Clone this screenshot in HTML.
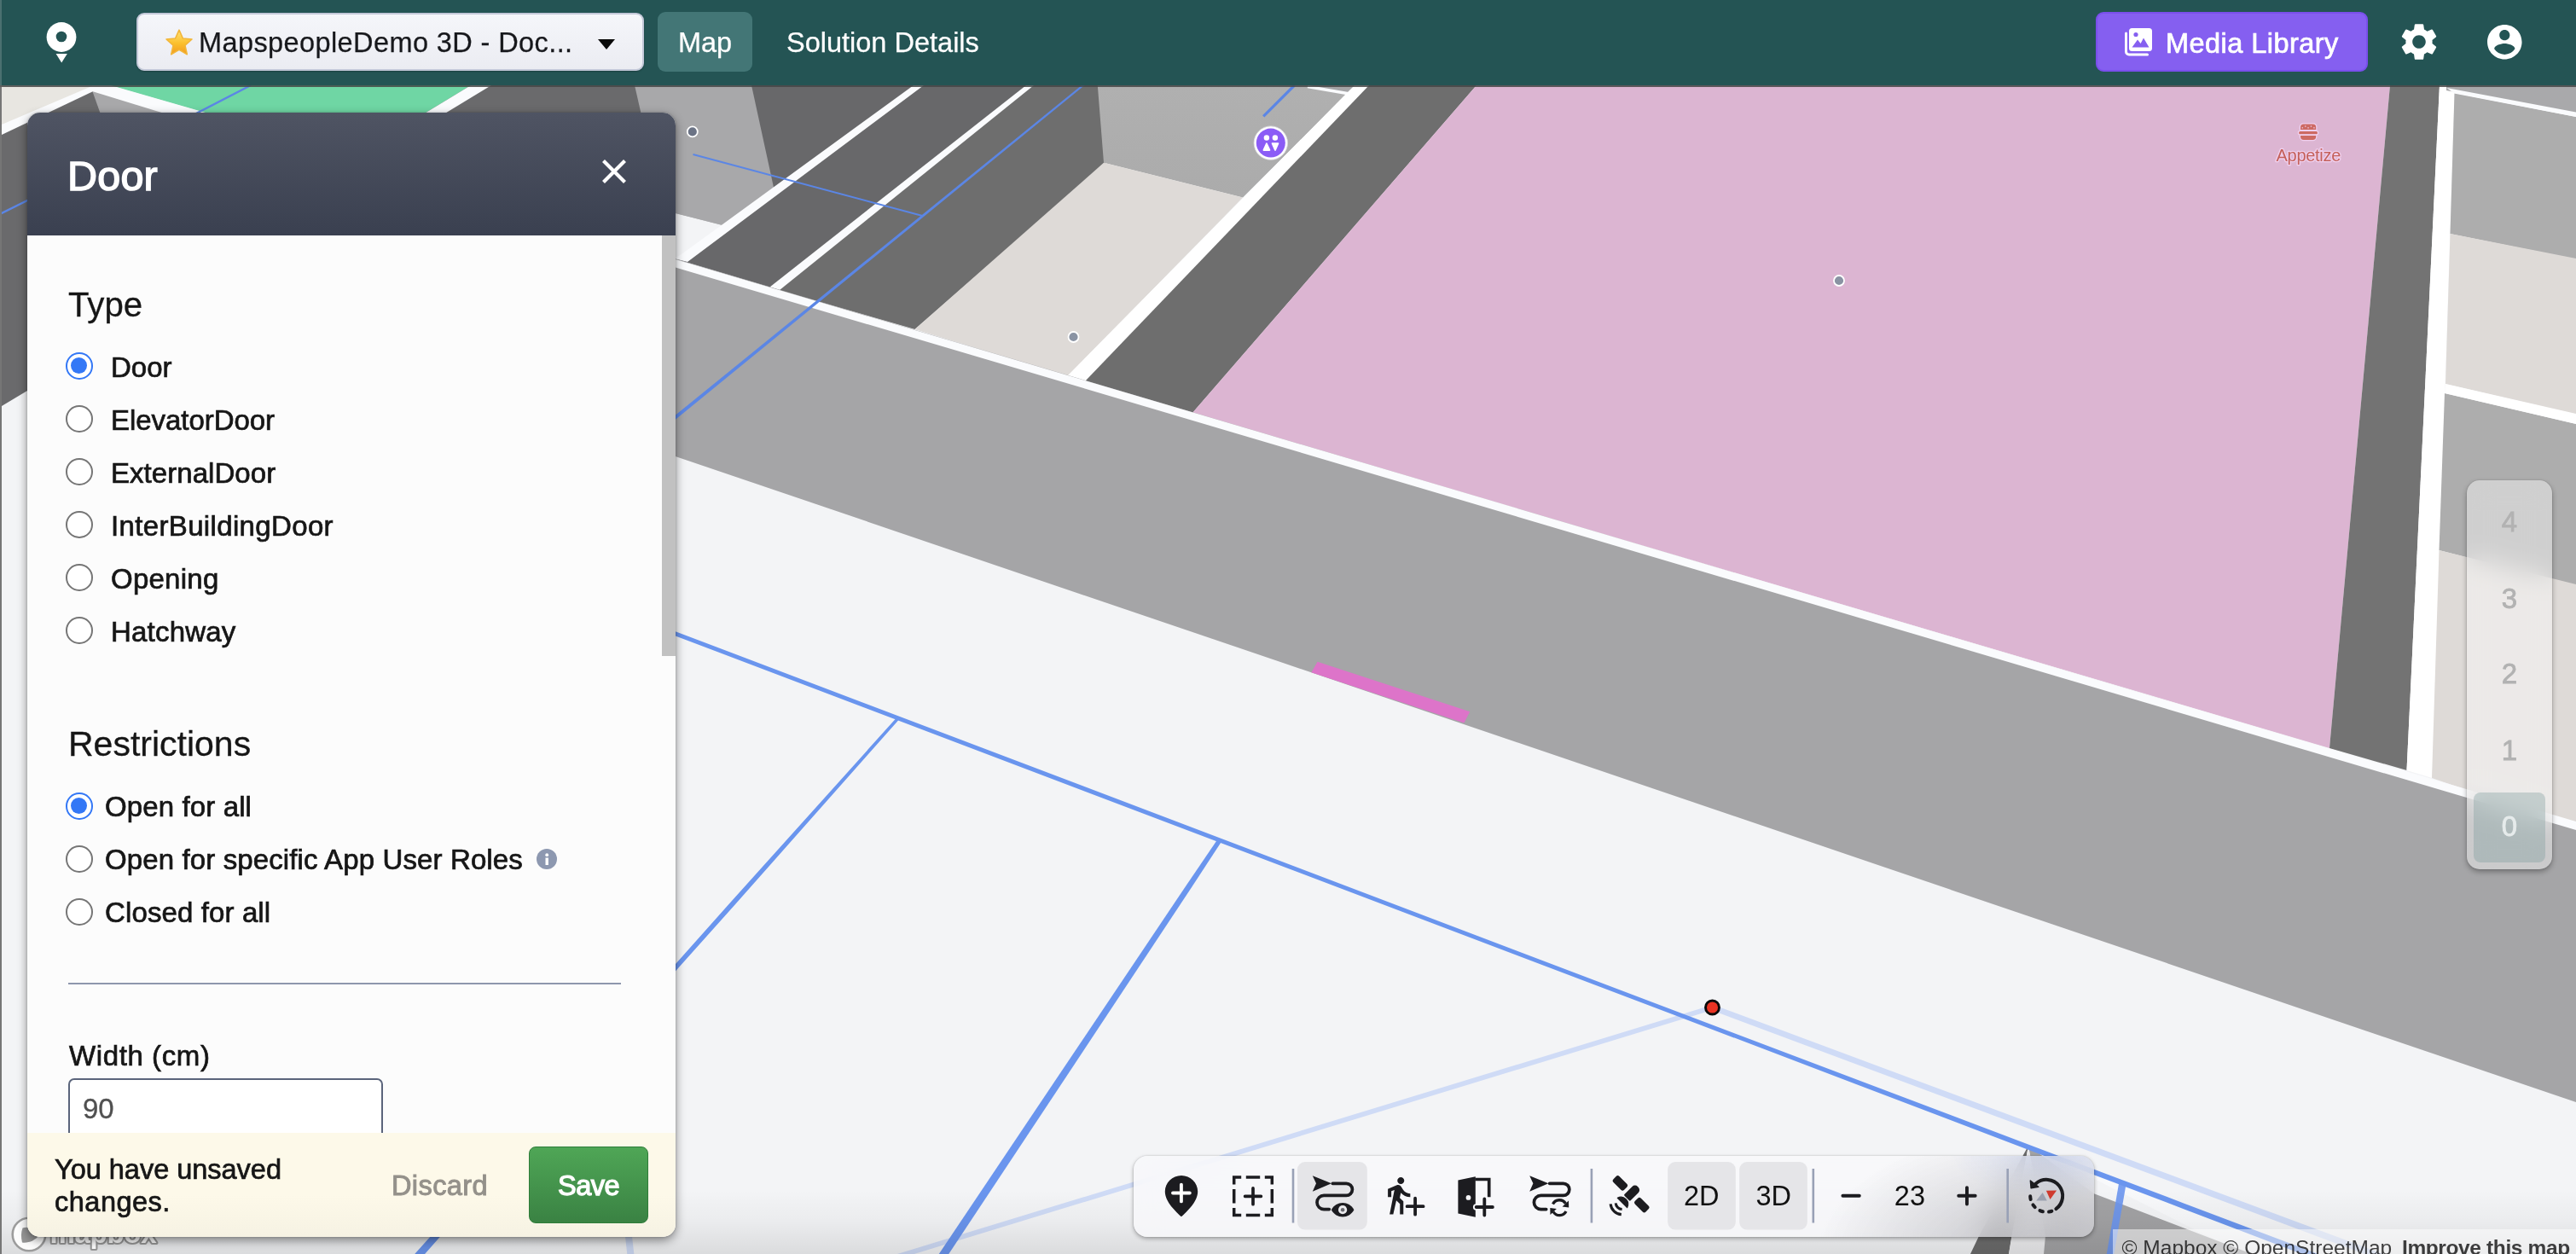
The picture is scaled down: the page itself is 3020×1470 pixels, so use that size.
<!DOCTYPE html>
<html lang="en">
<head>
<meta charset="utf-8">
<title>MapsIndoors CMS - Door</title>
<style>
*{box-sizing:border-box;}
html,body{margin:0;padding:0;}
body{width:3020px;height:1470px;overflow:hidden;position:relative;background:#f3f4f6;font-family:"Liberation Sans",sans-serif;color:#1a1a1a;}
#map{position:absolute;left:0;top:0;width:3020px;height:1470px;display:block;will-change:transform;}
.med{-webkit-text-stroke:0.55px currentColor;}

#hdr{position:absolute;left:0;top:0;width:3020px;height:100px;background:#245454;}
#hdrline{position:absolute;left:0;top:100px;width:3020px;height:2px;background:rgba(70,70,70,0.85);}
#edgeL{position:absolute;left:0;top:102px;width:2px;height:1368px;background:#767676;}
#edgeLh{position:absolute;left:0;top:0;width:2px;height:100px;background:#4b7070;}
#logo{position:absolute;left:52px;top:24px;width:40px;height:52px;}
#sel{position:absolute;left:160px;top:15px;width:595px;height:68px;border:2px solid #c3c8d8;border-radius:9px;background:linear-gradient(#f5f6fa,#ebecf2);box-shadow:0 1px 2px rgba(0,0,0,0.25);}
#sel .star{position:absolute;left:31px;top:15.5px;width:34px;height:34px;}
#sel .txt{will-change:transform;position:absolute;left:70.5px;top:1px;height:64px;line-height:65px;font-size:32.5px;color:#17181c;white-space:nowrap;letter-spacing:0.4px;-webkit-text-stroke:0.25px #17181c;}
#sel .car{position:absolute;left:539px;top:29px;width:0;height:0;border-left:10.5px solid transparent;border-right:10.5px solid transparent;border-top:12.5px solid #0a0a0a;}
#tabmap{will-change:transform;position:absolute;left:771px;top:14px;width:111px;height:70px;border-radius:9px;background:#437676;color:#fff;font-size:32.5px;line-height:72px;-webkit-text-stroke:0.25px #fff;text-align:center;}
#tabsol{will-change:transform;position:absolute;left:922px;top:14px;height:70px;color:#fff;font-size:32.5px;line-height:72px;white-space:nowrap;-webkit-text-stroke:0.25px #fff;letter-spacing:0px;}
#media{position:absolute;left:2457px;top:14px;width:319px;height:70px;border-radius:9px;background:#855ff0;border:2px solid #7a4fec;color:#fff;}
#media svg{position:absolute;left:31px;top:16px;width:34px;height:34px;}
#media span{will-change:transform;position:absolute;left:79.5px;top:1.5px;line-height:66px;font-size:32.5px;white-space:nowrap;letter-spacing:0.45px;-webkit-text-stroke:0.7px #fff;}
#gear{position:absolute;left:2810px;top:23px;width:52px;height:52px;}
#acct{position:absolute;left:2911.5px;top:24.5px;width:48.6px;height:48.6px;}

/*PCSS0*/
#panel{position:absolute;left:32px;top:132px;width:760px;height:1318px;border-radius:15px;background:#fcfcfc;box-shadow:0 4px 12px rgba(0,0,0,0.46),0 0 3px rgba(0,0,0,0.22);overflow:hidden;}
#phead{position:absolute;left:0;top:0;width:760px;height:144px;background:linear-gradient(#4f5463,#3a4050);}
#panel .t{position:absolute;line-height:1;white-space:nowrap;color:#161616;will-change:transform;}
#panel .m{-webkit-text-stroke:0.72px currentColor;}
.rad{position:absolute;margin:-0.4px 0 0 -0.6px;width:31.6px;height:31.6px;border-radius:50%;border:2.5px solid #767676;background:#fff;}
.rad.on{border-color:#3478f6;}
.rad.on:after{content:"";position:absolute;left:3.6px;top:3.6px;width:19.4px;height:19.4px;border-radius:50%;background:#3478f6;}
#pscroll{position:absolute;left:744px;top:144px;width:16px;height:493px;background:#c1c1c1;}
#pdiv{position:absolute;left:48px;top:1020px;width:648px;height:2px;background:#8e97ad;}
#pinp{position:absolute;left:48px;top:1132px;width:369px;height:82px;border:2px solid #5a647b;border-radius:7px;background:#fff;}
#pfoot{position:absolute;left:0;top:1196px;width:760px;height:122px;background:linear-gradient(#fdf9e9 60%,#f6f2e3);}
#psave{position:absolute;left:588px;top:1212px;width:140px;height:90px;border-radius:8px;border:1.5px solid #2f7d3a;background:linear-gradient(#4fa656,#3a8243);}
#pinfo{position:absolute;left:597px;top:863px;width:24px;height:24px;border-radius:50%;background:#8d98b0;}
/*PCSS1*/
/*TCSS0*/
#tb{position:absolute;left:1329px;top:1355px;width:1126px;height:94.5px;border-radius:16px;background:radial-gradient(ellipse 260px 150px at 1060px 118px,rgba(120,120,128,0.42),rgba(120,120,128,0) 100%),radial-gradient(ellipse 120px 60px at 1075px -8px,rgba(130,160,240,0.22),rgba(130,160,240,0) 100%),rgba(248,248,251,0.78);-webkit-backdrop-filter:blur(16px);backdrop-filter:blur(16px);box-shadow:0 2px 5px rgba(0,0,0,0.32),0 0 2px rgba(0,0,0,0.18);}
#tbs{position:absolute;left:1329px;top:1355px;width:1126px;height:94.5px;}
#tbs text{font-family:"Liberation Sans",sans-serif;font-size:32.5px;fill:#111;}
/*TCSS1*/
/*F0*/
#fl{position:absolute;left:2892px;top:562.5px;width:100px;height:456px;border-radius:15px;background:rgba(255,255,255,0.42);-webkit-backdrop-filter:blur(15px);backdrop-filter:blur(15px);box-shadow:0 3px 6px rgba(0,0,0,0.32),0 0 2px rgba(0,0,0,0.2);}
#fl .sel{position:absolute;left:8px;top:366.500px;width:84px;height:82px;border-radius:8px;background:rgba(125,155,155,0.36);}
#fl .n{position:absolute;left:0;width:100px;text-align:center;font-size:33px;line-height:1;color:#b2b2b2;-webkit-text-stroke:0.8px #b2b2b2;}
#attr{position:absolute;left:2477px;top:1441px;width:543px;height:40px;background:rgba(255,255,255,0.5);font-size:24.5px;line-height:1;color:rgba(0,0,0,0.75);white-space:nowrap;}
#attr span{position:absolute;left:10.500px;top:9.500px;}
#attr b{margin-left:5px;letter-spacing:-0.38px;}
/*F1*/
</style>
</head>
<body>
<svg id="map" viewBox="0 0 3020 1470">
<defs>
<linearGradient id="botg" x1="0" y1="0" x2="0" y2="1"><stop offset="0" stop-color="#000" stop-opacity="0"/><stop offset="0.5" stop-color="#000" stop-opacity="0.035"/><stop offset="1" stop-color="#000" stop-opacity="0.10"/></linearGradient><linearGradient id="faceg" x1="0" y1="0" x2="0" y2="1"><stop offset="0" stop-color="#b0b0b0"/><stop offset="1" stop-color="#ababab"/></linearGradient>
</defs>
<rect x="0" y="0" width="3020" height="1470" fill="#f3f4f6"/>
<!-- far-left wall beside panel -->
<polygon points="0,100 800,100 800,300 32,458 2,476 0,476" fill="#6a6a6c"/>
<!-- top-left corner bits -->
<polygon points="0,100 112,100 2,152 0,152" fill="#e8e6e1"/>
<polygon points="2,146 110,100 124,100 2,158" fill="#fafbfd"/>
<polygon points="108,106 200,134 118,134" fill="#a8a8aa"/>
<polygon points="108,100 132,100 250,134 196,134 108,107" fill="#fafbfd"/>
<polygon points="130,100 552,100 496,134 248,134" fill="#6fd6a4"/>
<polygon points="552,100 576,100 520,134 496,134" fill="#fafbfd"/>
<line x1="294" y1="100" x2="228" y2="134" stroke="#5b86e5" stroke-width="2.5"/>
<line x1="34" y1="234" x2="0" y2="251" stroke="#5b86e5" stroke-width="2.5"/>
<!-- upper-left block right of panel -->
<polygon points="780,100 1212,100 914,340 780,300" fill="#68686a"/>
<polygon points="1203,100 1292,100 1296,192 1072.5,386 902,337" fill="#6e6e6e"/>
<polygon points="744,100 881,100 907.3,221 848,264.2 780,247 760,170" fill="#a8a8aa"/>
<polygon points="780,247 848,264.2 795,304 780,300" fill="#f3f4f6"/>
<polygon points="1071,100 1083,100 806,307 790,303 799,298" fill="#fafbfd"/>
<polygon points="1203,100 1212,100 914,340 902.5,336.4" fill="#fafbfd"/>
<polygon points="1286.8,100 1592,100 1576,113 1457,231.6 1294,190.8" fill="url(#faceg)"/>
<polygon points="1533.7,100 1590,100 1588,111" fill="#a5a5a7"/>
<line x1="1533" y1="101.5" x2="1588" y2="111" stroke="#fafbfd" stroke-width="3.5"/>
<polygon points="1294,190.8 1457,231.6 1252,441 1072.5,386" fill="#dedad7"/>
<polygon points="1588,100 1606,100 1273,447 1251,441 1576,112" fill="#ffffff"/>
<polygon points="1605,100 1731,100 1398,484 1272,447" fill="#6e6e6e"/>
<!-- pink room -->
<polygon points="1731,100 2802,100 2731,877 1398,484" fill="#dcb5d2"/>
<polygon points="2802,100 2860,100 2821.5,903 2731,877" fill="#737373"/>
<polygon points="2860,100 2878,100 2851.5,912 2821.5,903" fill="#ffffff"/>
<!-- right rooms -->
<polygon points="2868,100 3020,100 3020,136 2868,106" fill="#a9a9ab"/>
<polygon points="2877.5,109 3020,137 3020,304 2872.5,274" fill="#adadad"/>
<polygon points="2868.5,103 3020,131.5 3020,137 2877,109.5" fill="#fafbfd"/>
<polygon points="2872.5,274 3020,303 3020,486 2867,450" fill="#dedad7"/>
<polygon points="2866,461 3020,497 3020,686 2859.5,645" fill="#adadad"/>
<polygon points="2867,450 3020,485 3020,497 2866,461" fill="#ffffff"/>
<polygon points="2859.5,645 3020,685 3020,970 2851,912" fill="#dedad7"/>
<!-- main wall -->
<polygon points="780,300 3020,964 3020,1292 780,531" fill="#a5a5a7"/>
<polygon points="780,300.5 3020,963 3020,973 780,310" fill="#fafbfd"/>
<!-- selected door -->
<polygon points="1544.6,775.7 1723.2,834.3 1716.4,847.5 1537.4,788.3" fill="#dd74c9"/>
<!-- lower-right block -->
<polygon points="2378,1343 2455,1372 2716,1470 2630,1470" fill="#f8f9fb"/>
<polygon points="2378,1343 2455,1399.3 2640,1470 2396,1470" fill="#a2a2a4"/>
<polygon points="2378,1343 2358.5,1449 2355,1470 2310,1470 2320,1449" fill="#6b6b6b"/>
<polygon points="2378,1343 2398,1449 2396,1470 2355,1470 2358.5,1449" fill="#ececee"/>
<!-- route network -->
<polygon points="2007.5,1178 2007.5,1184 1062,1473 1052,1470" fill="#cfdbf6"/>
<polygon points="2007.5,1177.5 2794,1470 2780,1473 2007.5,1184.5" fill="#cfdbf6"/>
<polygon points="780.0,735.7 1010.0,822.9 1960.0,1183.5 2455.0,1370.7 2560.0,1410.4 2745.0,1480.3 2745.0,1487.7 2560.0,1417.2 2455.0,1377.2 1960.0,1188.7 1010.0,828.3 780.0,740.9" fill="#6a95ee"/>
<polygon points="1049.6,843.0 854.4,1060.0 787.6,1135.0 477.2,1480.0 489.2,1480.0 795.0,1135.0 862.1,1060.0 1054.4,843.0" fill="#6a95ee"/>
<polygon points="1426.0,986.0 1389.3,1040.0 1248.3,1250.0 1092.7,1482.0 1104.3,1482.0 1258.1,1250.0 1397.1,1040.0 1432.4,986.0" fill="#6a95ee"/>
<line x1="2488.6" y1="1386" x2="2473.7" y2="1472" stroke="#6a95ee" stroke-width="8.5" stroke-opacity="0.9"/>
<line x1="736" y1="1440" x2="739.500" y2="1472" stroke="#cfdbf6" stroke-width="8"/>
<polygon points="1268,100 1271.5,100 780,501.5 780,496.3" fill="#5b86e5"/>
<line x1="812.5" y1="181" x2="1081.4" y2="253" stroke="#5b86e5" stroke-width="2"/>
<line x1="1517.6" y1="100" x2="1481.2" y2="136.3" stroke="#5b86e5" stroke-width="3.2"/>
<!-- markers -->
<circle cx="811.8" cy="154.4" r="6" fill="#6b7385" stroke="#ffffff" stroke-width="1.8"/>
<circle cx="1258.5" cy="395" r="6" fill="#8a93a3" stroke="#ffffff" stroke-width="1.8"/>
<circle cx="2156" cy="329" r="6" fill="#8a93a3" stroke="#ffffff" stroke-width="1.8"/>
<circle cx="2007.5" cy="1181" r="8" fill="#e93323" stroke="#0a0a0a" stroke-width="2.9"/>
<rect x="0" y="1395" width="3020" height="75" fill="url(#botg)"/><!--I0--><g><circle cx="1489.800" cy="167.600" r="19.700" fill="#ffffff" stroke="#dcdce0" stroke-width="0.800"/><circle cx="1489.800" cy="167.600" r="17" fill="#8b5cf6"/>
<circle cx="1484.900" cy="161.500" r="3.200" fill="#fff"/><circle cx="1494.900" cy="161.500" r="3.200" fill="#fff"/>
<polygon points="1481.500,176 1484.900,168.300 1488.400,176" fill="#fff" stroke="#fff" stroke-width="1.900" stroke-linejoin="round"/>
<polygon points="1491.600,168.200 1498.400,168.200 1495,175.900" fill="#fff" stroke="#fff" stroke-width="1.900" stroke-linejoin="round"/></g>
<g stroke="#f0d0ee" stroke-width="2.600" stroke-linejoin="round" paint-order="stroke" fill="#cd6a63">
<path d="M2697 151.900V149A3.500 3.500 0 0 1 2700.500 145.500H2711.700A3.500 3.500 0 0 1 2715.200 149V151.900Z"/>
<rect x="2695.100" y="154.100" width="21.900" height="3.100" rx="1.550"/>
<path d="M2697 159H2715.200V160A3.900 3.900 0 0 1 2711.300 163.900H2700.900A3.900 3.900 0 0 1 2697 160Z"/>
</g>
<g fill="#f0d0ee"><rect x="2698.600" y="149.200" width="1.300" height="1.300"/><rect x="2702.100" y="147.400" width="1.300" height="1.300"/><rect x="2705.400" y="149.200" width="1.300" height="1.300"/><rect x="2708.800" y="147.400" width="1.300" height="1.300"/><rect x="2712.300" y="149.200" width="1.300" height="1.300"/></g>
<text x="2706.300" y="188.700" text-anchor="middle" font-family="Liberation Sans, sans-serif" font-size="20" letter-spacing="-0.3" fill="#c4605a" stroke="#f0d0ee" stroke-width="2.600" stroke-linejoin="round" paint-order="stroke">Appetize</text>
<g opacity="0.92"><circle cx="34" cy="1447" r="19.300" fill="#ffffff" stroke="#979797" stroke-width="2.600"/><path d="M26.500 1439.500C33 1437 42 1440 46.500 1447.500 41 1454.500 33 1457.500 26 1456.500 24.500 1450.500 24.500 1445 26.500 1439.500Z" fill="#8f8f8f"/><text x="58.500" y="1457" font-family="Liberation Sans, sans-serif" font-weight="bold" font-size="33" fill="#ffffff" stroke="#8f8f8f" stroke-width="4.200" paint-order="stroke" stroke-linejoin="round" letter-spacing="-0.3">mapbox</text></g>
<!--I1-->
</svg>

<div id="hdr">
<svg id="logo" viewBox="0 0 40 52"><circle cx="20" cy="19.5" r="17.4" fill="#fff"/><circle cx="20" cy="19" r="6.3" fill="#245454"/><polygon points="13.6,39 26.8,39 20.2,49.5" fill="#fff"/></svg>
<div id="sel"><svg class="star" viewBox="0 0 36 36"><defs><linearGradient id="stg" x1="0" y1="0" x2="0" y2="1"><stop offset="0" stop-color="#ffe37a"/><stop offset="0.55" stop-color="#fbc02d"/><stop offset="1" stop-color="#f29a1f"/></linearGradient></defs><path d="M18 2.2 L22.6 12.6 L33.9 13.8 L25.4 21.4 L27.9 32.6 L18 26.8 L8.1 32.6 L10.6 21.4 L2.1 13.8 L13.4 12.6 Z" fill="url(#stg)" stroke="#f2b63a" stroke-width="1.6" stroke-linejoin="round"/></svg><div class="txt">MapspeopleDemo 3D - Doc...</div><div class="car"></div></div>
<div id="tabmap">Map</div>
<div id="tabsol">Solution Details</div>
<div id="media"><svg viewBox="0 0 34 34"><path d="M9.5 1h20A3.5 3.5 0 0 1 33 4.500v20A3.500 3.500 0 0 1 29.500 28h-20A3.500 3.500 0 0 1 6 24.500v-20A3.500 3.500 0 0 1 9.500 1z" fill="#fff"/><circle cx="14" cy="8.500" r="2.600" fill="#855ff0"/><path d="M9.500 23.500l6.500-9 3.600 4.600 3.400-6.600 6.500 11z" fill="#855ff0"/><path d="M2.500 7v21.500A3.500 3.500 0 0 0 6 32h21.500" fill="none" stroke="#fff" stroke-width="3" stroke-linecap="round"/></svg><span>Media Library</span></div>
<svg id="gear" viewBox="0 0 24 24"><path fill="#fff" d="M19.140 12.940c.040-.300.060-.610.060-.940 0-.320-.020-.640-.070-.940l2.030-1.580a.490.490 0 0 0 .120-.610l-1.920-3.320a.488.488 0 0 0-.590-.220l-2.390.960c-.500-.380-1.030-.700-1.620-.940l-.360-2.540a.484.484 0 0 0-.480-.410h-3.840c-.240 0-.430.170-.470.410l-.360 2.540c-.590.240-1.130.570-1.620.940l-2.390-.960c-.220-.080-.470 0-.590.220L2.740 8.870c-.120.210-.080.470.120.610l2.030 1.580c-.050.300-.090.630-.090.940s.020.640.070.940l-2.030 1.580a.490.490 0 0 0-.120.610l1.920 3.320c.120.220.370.290.590.220l2.390-.960c.500.380 1.030.700 1.620.940l.360 2.540c.050.240.240.410.480.410h3.840c.240 0 .440-.170.470-.410l.360-2.540c.590-.240 1.130-.560 1.620-.940l2.390.960c.220.080.470 0 .590-.220l1.920-3.320c.120-.220.070-.470-.120-.610l-2.010-1.580zM12 15.600c-1.980 0-3.600-1.620-3.600-3.600s1.620-3.600 3.600-3.600 3.600 1.620 3.600 3.600-1.620 3.600-3.600 3.600z"/></svg>
<svg id="acct" viewBox="0 0 24 24"><path fill="#fff" d="M12 2C6.480 2 2 6.480 2 12s4.480 10 10 10 10-4.480 10-10S17.520 2 12 2zm0 3c1.660 0 3 1.340 3 3s-1.340 3-3 3-3-1.340-3-3 1.340-3 3-3zm0 14.200a7.200 7.200 0 0 1-6-3.220c.030-1.990 4-3.080 6-3.080 1.990 0 5.970 1.090 6 3.080a7.200 7.200 0 0 1-6 3.220z"/></svg>
</div>
<div id="hdrline"></div><div id="edgeL"></div><div id="edgeLh"></div>

<!--P0--><div id="panel">
<div id="phead"></div>
<div class="t " style="left:47.0px;top:49.9px;font-size:48.5px;color:#fff;-webkit-text-stroke:1.5px #fff;letter-spacing:0.2px;">Door</div>
<svg style="position:absolute;left:673px;top:54px;width:30px;height:30px" viewBox="0 0 30 30"><path d="M2.500 2.500L27.500 27.500M27.500 2.500L2.500 27.500" stroke="#fff" stroke-width="4.200" stroke-linecap="butt"/></svg>
<div class="t " style="left:48.0px;top:205.5px;font-size:40.2px;-webkit-text-stroke:0.3px currentColor;">Type</div>
<div class="rad on" style="left:45.5px;top:281.5px"></div>
<div class="t m" style="left:97.7px;top:282.3px;font-size:33px;letter-spacing:0.00px;">Door</div>
<div class="rad" style="left:45.5px;top:343.5px"></div>
<div class="t m" style="left:97.7px;top:344.3px;font-size:33px;letter-spacing:-0.05px;">ElevatorDoor</div>
<div class="rad" style="left:45.5px;top:405.5px"></div>
<div class="t m" style="left:97.7px;top:406.3px;font-size:33px;letter-spacing:0.05px;">ExternalDoor</div>
<div class="rad" style="left:45.5px;top:467.5px"></div>
<div class="t m" style="left:97.7px;top:468.3px;font-size:33px;letter-spacing:0.35px;">InterBuildingDoor</div>
<div class="rad" style="left:45.5px;top:529.5px"></div>
<div class="t m" style="left:97.7px;top:530.3px;font-size:33px;letter-spacing:0.25px;">Opening</div>
<div class="rad" style="left:45.5px;top:591.5px"></div>
<div class="t m" style="left:97.7px;top:592.3px;font-size:33px;letter-spacing:0.20px;">Hatchway</div>
<div class="t " style="left:47.5px;top:720.3px;font-size:41px;-webkit-text-stroke:0.3px currentColor;">Restrictions</div>
<div class="rad on" style="left:45.5px;top:797.5px"></div>
<div class="t m" style="left:90.5px;top:797.1px;font-size:33px;letter-spacing:0.12px;">Open for all</div>
<div class="rad" style="left:45.5px;top:859.5px"></div>
<div class="t m" style="left:90.5px;top:859.1px;font-size:33px;letter-spacing:0.12px;">Open for specific App User Roles</div>
<div class="rad" style="left:45.5px;top:921.5px"></div>
<div class="t m" style="left:90.5px;top:921.1px;font-size:33px;letter-spacing:0.12px;">Closed for all</div>
<div id="pinfo"><svg viewBox="0 0 24 24" style="position:absolute;left:0;top:0;width:24px;height:24px"><circle cx="12.200" cy="7.200" r="1.900" fill="#fff"/><rect x="10.500" y="10.500" width="3.400" height="8.500" fill="#fff"/></svg></div>
<div id="pdiv"></div>
<div class="t m" style="left:49.2px;top:1088.6px;font-size:33px;letter-spacing:0.6px;">Width (cm)</div>
<div id="pinp"></div>
<div class="t " style="left:65.3px;top:1150.6px;font-size:33px;color:#505050;-webkit-text-stroke:0.3px #505050;">90</div>
<div id="pscroll"></div>
<div id="pfoot"></div>
<div class="t m" style="left:32.1px;top:1223.1px;font-size:32.5px;letter-spacing:-0.02px;">You have unsaved</div>
<div class="t m" style="left:32.1px;top:1261.3px;font-size:32.5px;letter-spacing:0.5px;">changes.</div>
<div class="t m" style="left:427.0px;top:1242.1px;font-size:32.5px;color:#94918a;letter-spacing:0.4px;-webkit-text-stroke:0.95px #94918a;">Discard</div>
<div id="psave"></div>
<div class="t " style="left:621.8px;top:1242.1px;font-size:32.5px;color:#fff;-webkit-text-stroke:1.25px #fff;letter-spacing:-0.5px;">Save</div>
</div><!--P1-->
<!--FL0--><div id="fl"><div class="sel"></div>
<div class="n" style="top:32.9px">4</div>
<div class="n" style="top:122.4px">3</div>
<div class="n" style="top:210.9px">2</div>
<div class="n" style="top:300.9px">1</div>
<div class="n" style="top:389.9px;color:#e6ebeb;-webkit-text-stroke:0.8px #e6ebeb">0</div>
</div><!--FL1-->
<!--T0--><div id="tb"></div>
<svg id="tbs" viewBox="1329 1355 1126 94.5">
<rect x="1521" y="1362" width="81.8" height="79.6" rx="9" fill="#e3e3e6" fill-opacity="0.92"/>
<rect x="1955.2" y="1362" width="79.6" height="79.6" rx="9" fill="#e3e3e6" fill-opacity="0.92"/>
<rect x="2039.2" y="1362" width="79.6" height="79.6" rx="9" fill="#e3e3e6" fill-opacity="0.92"/>
<rect x="1514.7" y="1370" width="2.6" height="63.5" fill="#99a1b6"/>
<rect x="1864.6000000000001" y="1370" width="2.6" height="63.5" fill="#99a1b6"/>
<rect x="2124.5" y="1370" width="2.6" height="63.5" fill="#99a1b6"/>
<rect x="2352.3999999999996" y="1370" width="2.6" height="63.5" fill="#99a1b6"/>
<g transform="translate(1365.800,1377.900)"><path d="M19.200 0C8.600 0 0 8.300 0 18.800 0 31 13 42.500 19.200 48.400 25.400 42.500 38.400 31 38.400 18.800 38.400 8.300 29.800 0 19.200 0Z" fill="#1c1c20"/><path d="M19.100 10.700V30.500M9.200 20.600H29" stroke="#fff" stroke-width="3.900" stroke-linecap="round"/></g>
<path d="M1446.7 1388.5V1380H1455.2 M1482.8 1380H1491.3V1388.5 M1491.3 1416.1V1424.6H1482.8 M1455.2 1424.6H1446.7V1416.1 M1460.8 1380H1477.2M1460.8 1424.6H1477.2M1446.7 1394.1V1410.5M1491.3 1394.1V1410.5" fill="none" stroke="#1c1c20" stroke-width="3.500" stroke-linejoin="miter"/>
<path d="M1459.6 1402.3H1478.4M1469.0 1392.8999999999999V1411.7" stroke="#1c1c20" stroke-width="3.700" stroke-linecap="round"/>
<g transform="translate(1538.8,1378.2)"><polygon points="0,0 22.200,9.100 0,18.600 4.200,9.100" fill="#1c1c20"/><path d="M23.500 9.100H39.600A7.050 7.050 0 0 1 39.600 23.200H13.300A8.100 8.100 0 0 0 13.300 39.400H19.500" fill="none" stroke="#1c1c20" stroke-width="3.700" stroke-linecap="round"/><path d="M22 40C25 34.500 30 31.800 35.300 31.800 40.600 31.800 45.600 34.500 48.600 40 45.600 45.500 40.600 48.200 35.300 48.200 30 48.200 25 45.500 22 40Z" fill="#1c1c20"/><circle cx="35.300" cy="40" r="5.100" fill="#ebebee"/><circle cx="35.300" cy="40" r="2.300" fill="#6a6a70"/></g>
<g transform="translate(1614.98,1376.97) scale(2.02)"><path fill="#1c1c20" d="M13.500 5.500c1.100 0 2-.900 2-2s-.900-2-2-2-2 .900-2 2 .900 2 2 2zM9.800 8.900L7 23h2.100l1.800-8 2.100 2v6h2v-7.500l-2.100-2 .6-3C14.800 12 16.800 13 19 13v-2c-1.900 0-3.500-1-4.300-2.400l-1-1.600c-.4-.6-1-1-1.700-1-.3 0-.5.100-.8.100L6 8.300V13h2V9.600l1.800-.7"/></g>
<path d="M1649.600 1414.200H1668.600M1659.100 1404.700V1423.700" stroke="#f7f7fa" stroke-width="7.500" stroke-linecap="round"/><path d="M1649.600 1414.200H1668.600M1659.100 1404.700V1423.700" stroke="#1c1c20" stroke-width="3.800" stroke-linecap="round"/>
<g transform="translate(1709.400,1379.300)"><path d="M20 3.200H36.300V24" fill="none" stroke="#1c1c20" stroke-width="3.700"/><polygon points="0,4.200 20.400,0 20.400,47.400 0,43.200" fill="#1c1c20"/><circle cx="12.100" cy="24.600" r="2.900" fill="#f4f4f7"/><path d="M21.300 35.700H40.500M30.900 26.100V45.300" stroke="#f7f7fa" stroke-width="7.600" stroke-linecap="round"/><path d="M21.300 35.700H40.500M30.900 26.100V45.300" stroke="#1c1c20" stroke-width="3.800" stroke-linecap="round"/></g>
<g transform="translate(1793.2,1378.2)"><polygon points="0,0 22.200,9.100 0,18.600 4.200,9.100" fill="#1c1c20"/><path d="M23.500 9.100H39.600A7.050 7.050 0 0 1 39.600 23.200H13.300A8.100 8.100 0 0 0 13.300 39.400H19.500" fill="none" stroke="#1c1c20" stroke-width="3.700" stroke-linecap="round"/><circle cx="35" cy="37.500" r="11.500" fill="#f7f7fa"/><path d="M27.300 33.200A8.600 8.600 0 0 1 42.300 32.700" fill="none" stroke="#1c1c20" stroke-width="3.300"/><polygon points="45.800,29.200 46,37.200 38.400,36.300" fill="#1c1c20"/><path d="M42.800 41.800A8.600 8.600 0 0 1 27.800 42.300" fill="none" stroke="#1c1c20" stroke-width="3.300"/><polygon points="24.300,45.800 24.100,37.800 31.700,38.700" fill="#1c1c20"/></g>
<path d="M-2.2 -8.9H2.2A2.7 2.7 0 0 1 4.9 -6.2V6.2A2.7 2.7 0 0 1 2.2 8.9H-2.2A2.7 2.7 0 0 1 -4.9 6.2V-6.2A2.7 2.7 0 0 1 -2.2 -8.9Z" fill="#1c1c20" transform="translate(1899.4,1386.9) rotate(-45)"/>
<path d="M-2.2 -8.9H2.2A2.7 2.7 0 0 1 4.9 -6.2V6.2A2.7 2.7 0 0 1 2.2 8.9H-2.2A2.7 2.7 0 0 1 -4.9 6.2V-6.2A2.7 2.7 0 0 1 -2.2 -8.9Z" fill="#1c1c20" transform="translate(1924.8,1412.6) rotate(-45)"/>
<path d="M-0.5 -9.3H0.5A4.6 4.6 0 0 1 5.1 -4.700000000000001V8.100000000000001A1.2 1.2 0 0 1 3.8999999999999995 9.3H-3.8999999999999995A1.2 1.2 0 0 1 -5.1 8.100000000000001V-4.700000000000001A4.6 4.6 0 0 1 -0.5 -9.3Z" fill="#1c1c20" transform="translate(1913.8,1397.9) rotate(45)"/>
<path d="M1896.300 1404.300A8.350 8.350 0 0 1 1907.600 1415.600Z" fill="#1c1c20" stroke="#1c1c20" stroke-width="1.200" stroke-linejoin="round"/>
<path d="M1894.200 1410.300A7.700 7.700 0 0 0 1901.600 1417.600" fill="none" stroke="#1c1c20" stroke-width="3" stroke-linecap="butt"/>
<path d="M1888.150 1411.300A13.750 13.750 0 0 0 1900.800 1423.650" fill="none" stroke="#1c1c20" stroke-width="3.100" stroke-linecap="butt"/>
<text x="1994.700" y="1413.300" text-anchor="middle">2D</text><text x="2079.200" y="1413.300" text-anchor="middle">3D</text><text x="2238.900" y="1413.300" text-anchor="middle">23</text>
<path d="M2160.400 1401.800H2179.800" stroke="#1c1c20" stroke-width="3.900" stroke-linecap="round"/>
<path d="M2296.200 1401.800H2315.700M2305.950 1392.100V1411.500" stroke="#1c1c20" stroke-width="3.900" stroke-linecap="round"/>
<path d="M2386.73 1387.46A19.0 19.0 0 1 1 2410.37 1417.17" fill="none" stroke="#1c1c20" stroke-width="4" stroke-linecap="round"/>
<path d="M2405.39 1419.76A19.0 19.0 0 0 1 2380.20 1401.47" fill="none" stroke="#1c1c20" stroke-width="4" stroke-dasharray="3.600 7" stroke-linecap="round"/>
<polygon points="2380.300,1384 2381.050,1392.800 2389.800,1391.300" fill="#1c1c20" stroke="#1c1c20" stroke-width="1.400" stroke-linejoin="round"/>
<polygon points="2387.200,1407.500 2394.700,1397.900 2399.800,1407.500" fill="#9ba1b0"/><polygon points="2398.900,1395.800 2411.100,1395.600 2403.500,1406" fill="#cf3a2e"/>
</svg><!--T1-->
<!--A0--><div id="attr"><span>© Mapbox © OpenStreetMap <b>Improve this map</b></span></div><!--A1-->
</body>
</html>
